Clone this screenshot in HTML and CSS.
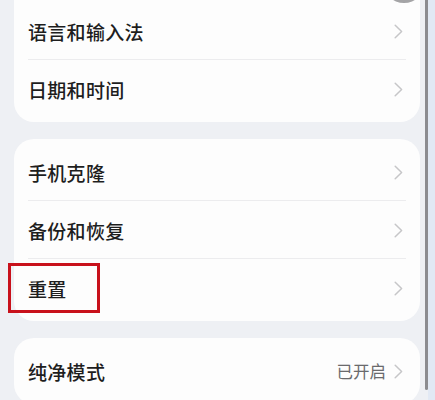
FILE: index.html
```html
<!DOCTYPE html>
<html lang="zh-CN">
<head>
<meta charset="utf-8">
<title>设置</title>
<link rel="stylesheet" href="styles.css">
</head>
<body>
<div class="page">
  <main class="content">
    <section class="card card-first">
      <div class="avatar"></div>
      <div class="row"><span class="label">语言和输入法</span><span class="right"><svg class="chev" viewBox="0 0 9 15"><path d="M1.2 1.2 7.6 7.5 1.2 13.8"/></svg></span></div>
      <div class="row sep"><span class="label">日期和时间</span><span class="right"><svg class="chev" viewBox="0 0 9 15"><path d="M1.2 1.2 7.6 7.5 1.2 13.8"/></svg></span></div>
    </section>
    <section class="card">
      <div class="row"><span class="label">手机克隆</span><span class="right"><svg class="chev" viewBox="0 0 9 15"><path d="M1.2 1.2 7.6 7.5 1.2 13.8"/></svg></span></div>
      <div class="row sep"><span class="label">备份和恢复</span><span class="right"><svg class="chev" viewBox="0 0 9 15"><path d="M1.2 1.2 7.6 7.5 1.2 13.8"/></svg></span></div>
      <div class="row sep"><span class="label">重置</span><span class="right"><svg class="chev" viewBox="0 0 9 15"><path d="M1.2 1.2 7.6 7.5 1.2 13.8"/></svg></span><div class="highlight"></div></div>
    </section>
    <section class="card">
      <div class="row"><span class="label">纯净模式</span><span class="right"><span class="value">已开启</span><svg class="chev" viewBox="0 0 9 15"><path d="M1.2 1.2 7.6 7.5 1.2 13.8"/></svg></span></div>
    </section>
  </main>
  <div class="scrollbar"></div>
  <div class="edge"></div>
</div>
</body>
</html>
```
FILE: styles.css
```css
* { box-sizing: border-box; }
html, body { margin: 0; padding: 0; }
body {
  background: #eef0f4;
  font-family: "Noto Sans CJK SC", "Noto Sans", sans-serif;
  width: 435px;
  height: 400px;
  overflow: hidden;
}
.page {
  display: flex;
  align-items: flex-start;
  height: 400px;
}
.content {
  width: 425px;
  padding: 0 5px 0 14px;
  display: flex;
  flex-direction: column;
  gap: 17px;
}
.card {
  position: relative;
  background: #fdfdfd;
  border-radius: 20px;
  padding: 4px 0;
}
.card-first {
  margin-top: -30px;
  padding-top: 32px;
}
.avatar {
  position: absolute;
  right: -5px;
  top: 0;
  width: 42px;
  height: 42px;
  border-radius: 50%;
  background: #a4a4a6;
  transform: translateY(-9px);
}
.row {
  position: relative;
  height: 58px;
  display: flex;
  align-items: center;
  justify-content: space-between;
  padding: 0 17px 0 14px;
}
.row.sep::before {
  content: "";
  position: absolute;
  top: -1px;
  left: 14px;
  right: 14px;
  height: 1px;
  background: #ececee;
}
.label {
  font-size: 19px;
  font-weight: 500;
  color: #1e1e1e;
  letter-spacing: 0.3px;
}
.right {
  display: flex;
  align-items: center;
  gap: 8px;
}
.value {
  font-size: 16.5px;
  color: #6a6a6c;
}
.chev {
  width: 9px;
  height: 15px;
  fill: none;
  stroke: #c6c6c8;
  stroke-width: 1.5;
  stroke-linecap: round;
  stroke-linejoin: round;
}
.highlight {
  position: absolute;
  left: -6px;
  top: 4px;
  width: 92px;
  height: 50px;
  border: 3px solid #c8111b;
}
.scrollbar {
  width: 3px;
  height: 390px;
  background: #8c8c90;
  border-radius: 0 0 2px 2px;
}
.edge {
  width: 7px;
  height: 400px;
  background: #e2e9f4;
}
```
